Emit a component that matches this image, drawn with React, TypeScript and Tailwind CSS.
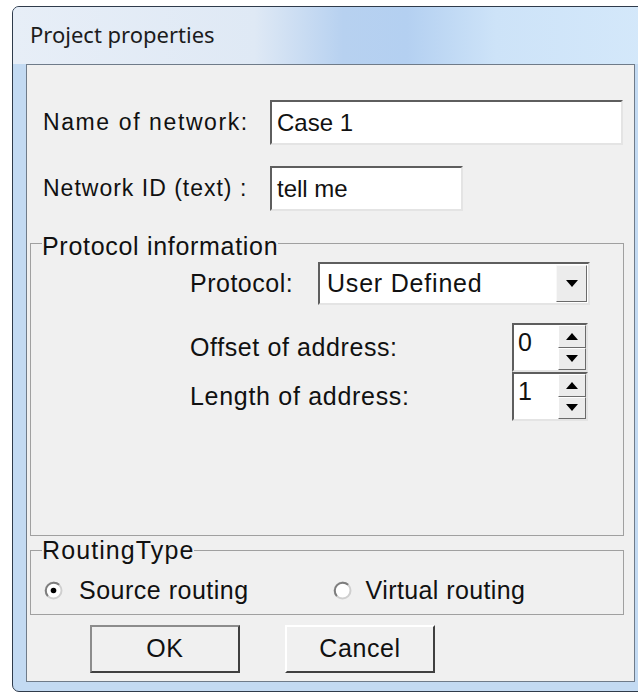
import type { ReactNode } from "react"

// Sunken edit field, classic Win32 look
function Field({ width, children }: { width: string; children: ReactNode }) {
  return (
    <div
      className={`flex h-[45px] items-center border-2 border-t-[#5e5e5e] border-l-[#5e5e5e] border-r-[#e4e4e4] border-b-[#e4e4e4] bg-white pl-[5px] text-[24px] ${width}`}
    >
      {children}
    </div>
  )
}

function Arrow({ up }: { up?: boolean }) {
  return (
    <svg width="12" height="7" viewBox="0 0 12 7">
      {up ? <path d="M0 7 L6 0 L12 7 Z" fill="#000" /> : <path d="M0 0 L12 0 L6 7 Z" fill="#000" />}
    </svg>
  )
}

function SpinButton({ up }: { up?: boolean }) {
  return (
    <div className="flex flex-1 items-center justify-center border border-t-white border-l-white border-r-[#6b6b6b] border-b-[#6b6b6b] bg-[#ececec]">
      <Arrow up={up} />
    </div>
  )
}

function Spinner({ value }: { value: string }) {
  return (
    <div className="flex h-[49px] w-[76px] border-2 border-t-[#5e5e5e] border-l-[#5e5e5e] border-r-[#e4e4e4] border-b-[#e4e4e4] bg-white">
      <div className="flex flex-1 items-start pl-[4px] pt-[3px] text-[25px] leading-[28px]">{value}</div>
      <div className="flex w-[28px] flex-col">
        <SpinButton up />
        <SpinButton />
      </div>
    </div>
  )
}

function Radio({ checked }: { checked?: boolean }) {
  return (
    <svg width="19" height="19" viewBox="0 0 19 19">
      <circle cx="9.5" cy="9.5" r="8" fill="#fff" stroke="#cfcfcf" strokeWidth="2" />
      <path d="M3.85 15.15 A8 8 0 0 1 15.15 3.85" fill="none" stroke="#7d7d7d" strokeWidth="2" />
      {checked && <circle cx="9.5" cy="9.5" r="2.8" fill="#000" />}
    </svg>
  )
}

function Button({ label, isDefault }: { label: string; isDefault?: boolean }) {
  return (
    <button
      className={
        isDefault
          ? "flex h-[48px] w-[150px] items-center justify-center border-2 border-t-[#8c8c8c] border-l-[#8c8c8c] border-r-[#404040] border-b-[#404040] bg-[#f0f0f0] text-[25px] tracking-[0.6px]"
          : "flex h-[48px] w-[150px] items-center justify-center border-2 border-t-white border-l-white border-r-[#404040] border-b-[#404040] bg-[#f0f0f0] text-[25px] tracking-[0.6px]"
      }
    >
      {label}
    </button>
  )
}

export default function App() {
  return (
    <div className="h-[692px] w-[638px] overflow-hidden bg-white font-['Liberation_Sans',Arial,sans-serif] text-[#111]">
      <div className="ml-[12px] mt-[6px] h-[686px] w-[637px] overflow-hidden rounded-[7px] border border-[#2f3b4b] bg-[#c3daf2]">
        {/* caption */}
        <div className="h-[57px] bg-[linear-gradient(90deg,#e7eef7_0%,#dfe9f5_38%,#b7d1f0_52%,#b4d0f1_62%,#cde3f8_76%,#d4e8fa_100%)] pl-[17px] pt-[12px] font-['Noto_Sans',sans-serif] text-[22px] leading-[30px] text-[#1c1c1c]">
          Project properties
        </div>

        {/* client area */}
        <div className="ml-[13px] flex h-[618px] w-[609px] flex-col border border-[#6f7b89] bg-[#f0f0f0]">
          <div className="mt-[35px] flex items-center">
            <span className="w-[243px] pl-[16px] text-[23px] tracking-[1.6px]">Name of network:</span>
            <Field width="w-[353px]">Case 1</Field>
          </div>
          <div className="mt-[21px] flex items-center">
            <span className="w-[243px] pl-[16px] text-[23px] tracking-[1px]">Network ID (text) :</span>
            <Field width="w-[193px]">tell me</Field>
          </div>

          <fieldset className="ml-[3px] mt-[15px] h-[310px] w-[594px] border border-[#a0a0a0]">
            <legend className="ml-[11px] pt-[6px] text-[25px] leading-[28px] tracking-[0.7px]">Protocol information</legend>
            <div className="mt-[2px] flex items-center">
              <span className="w-[287px] pl-[159px] text-[25px] tracking-[0.5px]">Protocol:</span>
              <div className="flex h-[43px] w-[272px] border-2 border-t-[#5e5e5e] border-l-[#5e5e5e] border-r-[#e4e4e4] border-b-[#e4e4e4] bg-white">
                <div className="flex flex-1 items-center pl-[7px] text-[25px] tracking-[0.8px]">User Defined</div>
                <div className="m-[1px] flex w-[31px] items-center justify-center border border-t-[#f8f8f8] border-l-[#f8f8f8] border-r-[#6b6b6b] border-b-[#6b6b6b] bg-[#ececec]">
                  <Arrow />
                </div>
              </div>
            </div>
            <div className="mt-[18px] flex items-center">
              <span className="w-[481px] pl-[159px] text-[25px] tracking-[0.6px]">Offset of address:</span>
              <Spinner value="0" />
            </div>
            <div className="flex items-center">
              <span className="w-[481px] pl-[159px] text-[25px] tracking-[0.7px]">Length of address:</span>
              <Spinner value="1" />
            </div>
          </fieldset>

          <fieldset className="ml-[3px] h-[79px] w-[594px] border border-[#a0a0a0]">
            <legend className="ml-[11px] text-[25px] leading-[28px] tracking-[1.1px]">RoutingType</legend>
            <div className="mt-[12px] flex items-center text-[25px] leading-[28px]">
              <div className="ml-[13px] flex items-center">
                <Radio checked />
                <span className="ml-[16px] tracking-[0.5px]">Source routing</span>
              </div>
              <div className="ml-[84px] flex items-center">
                <Radio />
                <span className="ml-[14px] tracking-[0.4px]">Virtual routing</span>
              </div>
            </div>
          </fieldset>

          <div className="mt-[10px] flex gap-[45px] pl-[63px]">
            <Button label="OK" isDefault />
            <Button label="Cancel" />
          </div>
        </div>
      </div>
    </div>
  )
}
